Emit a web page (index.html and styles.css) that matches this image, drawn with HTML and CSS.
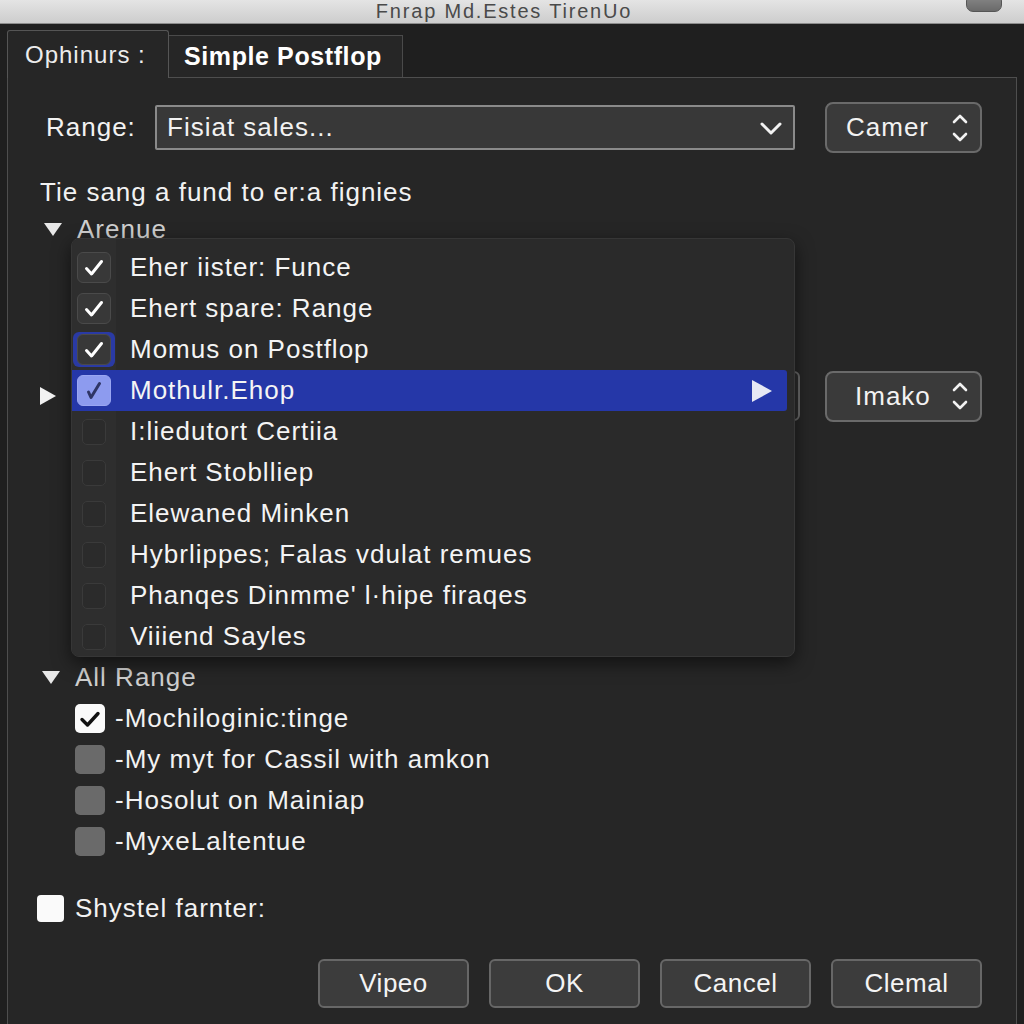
FILE: index.html
```html
<!DOCTYPE html>
<html>
<head>
<meta charset="utf-8">
<link rel="stylesheet" href="styles.css">
</head>
<body>
<div class="window">
  <div class="titlebar">
    <span class="title">Fnrap Md.Estes TirenUo</span>
    <span class="pill"></span>
  </div>
  <div class="tabs">
    <div class="tab tab-active">Ophinurs :</div>
    <div class="tab tab-bold">Simple Postflop</div>
  </div>
  <div class="panel">
    <div class="range-row">
      <span class="range-label">Range:</span>
      <div class="select">
        <span>Fisiat sales...</span>
        <svg class="chev" width="24" height="16" viewBox="0 0 24 16"><path d="M3 3 L12 12 L21 3" fill="none" stroke="#f2f2f2" stroke-width="3" stroke-linecap="round" stroke-linejoin="round"/></svg>
      </div>
      <div class="stepper">
        <span>Camer</span>
        <svg width="16" height="32" viewBox="0 0 16 32"><path d="M2 10 L8 4 L14 10 M2 22 L8 28 L14 22" fill="none" stroke="#f2f2f2" stroke-width="2.6" stroke-linecap="round" stroke-linejoin="round"/></svg>
      </div>
    </div>
    <div class="desc">Tie sang a fund to er:a fignies</div>
    <div class="section-head head-a"><span class="tri-down"></span><span class="dim">Arenue</span></div>
    <div class="under-row">
      <span class="tri-right"></span>
      <div class="select-under"></div>
      <div class="stepper stepper-under">
        <span>Imako</span>
        <svg width="16" height="32" viewBox="0 0 16 32"><path d="M2 10 L8 4 L14 10 M2 22 L8 28 L14 22" fill="none" stroke="#f2f2f2" stroke-width="2.6" stroke-linecap="round" stroke-linejoin="round"/></svg>
      </div>
    </div>
    <div class="section-head head-b"><span class="tri-down"></span><span class="dim">All Range</span></div>
    <div class="list">
      <div class="item"><span class="cb cb-white"><svg width="24" height="24" viewBox="0 0 24 24"><path d="M4 12.5 L9.5 18 L20 6.5" fill="none" stroke="#111" stroke-width="3.4" stroke-linecap="round" stroke-linejoin="round"/></svg></span><span>-Mochiloginic:tinge</span></div>
      <div class="item"><span class="cb cb-gray"></span><span>-My myt for Cassil with amkon</span></div>
      <div class="item"><span class="cb cb-gray"></span><span>-Hosolut on Mainiap</span></div>
      <div class="item"><span class="cb cb-gray"></span><span>-MyxeLaltentue</span></div>
    </div>
    <div class="solo"><span class="cb-solo"></span><span>Shystel farnter:</span></div>
    <div class="buttons">
      <button class="btn">Vipeo</button>
      <button class="btn">OK</button>
      <button class="btn">Cancel</button>
      <button class="btn">Clemal</button>
    </div>

    <div class="menu">
      <div class="gutter"></div>
      <div class="mi"><span class="cell"><span class="mcb mcb-on"><svg width="22" height="22" viewBox="0 0 22 22"><path d="M3.5 11.5 L8.5 17 L18.5 4.5" fill="none" stroke="#fff" stroke-width="3" stroke-linecap="round" stroke-linejoin="round"/></svg></span></span><span class="mt">Eher iister: Funce</span></div>
      <div class="mi"><span class="cell"><span class="mcb mcb-on"><svg width="22" height="22" viewBox="0 0 22 22"><path d="M3.5 11.5 L8.5 17 L18.5 4.5" fill="none" stroke="#fff" stroke-width="3" stroke-linecap="round" stroke-linejoin="round"/></svg></span></span><span class="mt">Ehert spare: Range</span></div>
      <div class="mi"><span class="cell"><span class="focus"><span class="mcb mcb-on"><svg width="22" height="22" viewBox="0 0 22 22"><path d="M3.5 11.5 L8.5 17 L18.5 4.5" fill="none" stroke="#fff" stroke-width="3" stroke-linecap="round" stroke-linejoin="round"/></svg></span></span></span><span class="mt">Momus on Postflop</span></div>
      <div class="mi mi-hl"><span class="cell"><span class="mcb mcb-hl"><svg width="22" height="22" viewBox="0 0 22 22"><path d="M5.5 12 L8 17.5 L16.5 3.5" fill="none" stroke="#2f3566" stroke-width="3" stroke-linecap="round" stroke-linejoin="round"/></svg></span></span><span class="mt">Mothulr.Ehop</span><span class="arrow"></span></div>
      <div class="mi"><span class="cell"><span class="mcb mcb-off"></span></span><span class="mt">I:liedutort Certiia</span></div>
      <div class="mi"><span class="cell"><span class="mcb mcb-off"></span></span><span class="mt">Ehert Stoblliep</span></div>
      <div class="mi"><span class="cell"><span class="mcb mcb-off"></span></span><span class="mt">Elewaned Minken</span></div>
      <div class="mi"><span class="cell"><span class="mcb mcb-off"></span></span><span class="mt">Hybrlippes; Falas vdulat remues</span></div>
      <div class="mi"><span class="cell"><span class="mcb mcb-off"></span></span><span class="mt">Phanqes Dinmme' l·hipe firaqes</span></div>
      <div class="mi"><span class="cell"><span class="mcb mcb-off"></span></span><span class="mt">Viiiend Sayles</span></div>
    </div>
  </div>
</div>
</body>
</html>
```
FILE: styles.css
```css
* { box-sizing: border-box; }
html, body { margin: 0; padding: 0; }
body {
  width: 1024px;
  height: 1024px;
  overflow: hidden;
  background: #1f1f1f;
  font-family: "Liberation Sans", Arial, sans-serif;
  letter-spacing: 1px;
  color: #f2f2f2;
}
.window {
  width: 1024px;
  height: 1024px;
  display: flex;
  flex-direction: column;
}
.titlebar {
  height: 24px;
  flex: none;
  background: linear-gradient(#e4e4e4, #cdcdcd);
  border-bottom: 1px solid #8c8c8c;
  position: relative;
  display: flex;
  justify-content: center;
  overflow: hidden;
}
.title {
  font-size: 20px;
  line-height: 22px;
  height: 22px;
  color: #4a4a4a;
  margin-right: 16px;
  margin-top: 0;
  letter-spacing: 1.8px;
}
.pill {
  position: absolute;
  right: 22px;
  top: -6px;
  width: 36px;
  height: 18px;
  border-radius: 7px;
  background: linear-gradient(#8a8a8a, #6a6a6a);
  border: 1px solid #555;
}
.tabs {
  flex: none;
  display: flex;
  align-items: flex-end;
  margin-top: 6px;
  padding-left: 7px;
  height: 47px;
}
.tab {
  display: flex;
  align-items: center;
  border: 1px solid #4a4a4a;
  border-bottom: none;
}
.tab-active {
  width: 162px;
  height: 48px;
  margin-bottom: -1px;
  background: #262626;
  border-color: #555;
  border-radius: 3px 3px 0 0;
  position: relative;
  z-index: 2;
  color: #ececec;
  padding-left: 17px;
  font-size: 24px;
}
.tab-bold {
  width: 234px;
  height: 42px;
  background: #262626;
  font-weight: bold;
  color: #ffffff;
  padding-left: 15px;
  border-left: none;
  font-size: 25px;
  letter-spacing: 0.6px;
}
.panel {
  flex: 1;
  margin-left: 7px;
  width: 1010px;
  background: #262626;
  border: 1px solid #4e4e4e;
  border-bottom: none;
  position: relative;
  display: flex;
  flex-direction: column;
}
.range-row {
  margin-top: 24px;
  height: 51px;
  display: flex;
  align-items: center;
  margin-left: 38px;
}
.range-label {
  width: 109px;
  font-size: 26px;
}
.select {
  width: 640px;
  height: 45px;
  background: #383838;
  border: 2px solid #8a8a8a;
  border-radius: 2px;
  display: flex;
  align-items: center;
  justify-content: space-between;
  padding: 0 10px 0 10px;
  font-size: 26px;
}
.chev { margin-top: 2px; }
.stepper {
  margin-left: 30px;
  width: 157px;
  height: 51px;
  border-radius: 8px;
  background: #3a3a3a;
  border: 2px solid #6a6a6a;
  display: flex;
  align-items: center;
  justify-content: space-between;
  padding: 0 12px 0 19px;
  font-size: 26px;
}
.desc {
  margin-top: 23px;
  height: 32px;
  line-height: 32px;
  margin-left: 32px;
  font-size: 26px;
}
.section-head {
  height: 30px;
  display: flex;
  align-items: center;
  font-size: 26px;
}
.head-a { margin-top: 6px; margin-left: 36px; }
.head-b { margin-top: 241px; margin-left: 34px; }
.dim { color: #cfcfcf; margin-left: 15px; }
.tri-down {
  width: 0; height: 0;
  border-left: 9px solid transparent;
  border-right: 9px solid transparent;
  border-top: 13px solid #e8e8e8;
}
.under-row {
  margin-top: 127px;
  height: 50px;
  display: flex;
  align-items: center;
  margin-left: 32px;
}
.tri-right {
  width: 0; height: 0;
  border-top: 9px solid transparent;
  border-bottom: 9px solid transparent;
  border-left: 16px solid #f2f2f2;
  margin-right: 99px;
}
.select-under {
  width: 645px;
  height: 50px;
  border: 2px solid #6a6a6a;
  border-radius: 6px;
  background: #2c2c2c;
}
.stepper-under {
  margin-left: 25px;
  padding-left: 28px;
}
.list {
  margin-top: 6px;
  margin-left: 67px;
  display: flex;
  flex-direction: column;
}
.item {
  height: 41px;
  display: flex;
  align-items: center;
  font-size: 26px;
}
.cb {
  width: 30px;
  height: 29px;
  border-radius: 5px;
  margin-right: 10px;
  display: flex;
  align-items: center;
  justify-content: center;
}
.cb-white { background: #fafafa; }
.cb-gray { background: #6a6a6a; }
.solo {
  margin-top: 31px;
  margin-left: 29px;
  height: 30px;
  display: flex;
  align-items: center;
  font-size: 26px;
}
.cb-solo {
  width: 27px;
  height: 27px;
  background: #fafafa;
  border-radius: 4px;
  margin-right: 11px;
}
.buttons {
  margin-top: 36px;
  height: 49px;
  display: flex;
  justify-content: flex-end;
  gap: 20px;
  margin-right: 34px;
}
.btn {
  width: 151px;
  height: 49px;
  background: #3c3c3c;
  border: 2px solid #676767;
  border-radius: 6px;
  color: #f4f4f4;
  font-family: "Liberation Sans", Arial, sans-serif;
  font-size: 26px;
  letter-spacing: 0.5px;
  padding: 0;
}
.menu {
  position: absolute;
  left: 63px;
  top: 160px;
  width: 724px;
  height: 419px;
  background: #2a2a2a;
  border: 1px solid #363636;
  border-radius: 8px;
  box-shadow: 0 6px 18px rgba(0,0,0,0.55);
  padding-top: 8px;
  overflow: hidden;
  display: flex;
  flex-direction: column;
  z-index: 5;
}
.gutter {
  position: absolute;
  left: 0; top: 0; bottom: 0;
  width: 44px;
  background: #2e2e2e;
}
.mi {
  position: relative;
  height: 41px;
  display: flex;
  align-items: center;
  font-size: 26px;
  color: #f4f4f4;
  margin-right: 7px;
}
.mi-hl {
  background: #2537a8;
  border-radius: 0 3px 3px 0;
}
.cell {
  width: 44px;
  height: 41px;
  flex: none;
  display: flex;
  align-items: center;
  justify-content: center;
}
.mt { margin-left: 14px; }
.mcb {
  width: 34px;
  height: 31px;
  border-radius: 6px;
  display: flex;
  align-items: center;
  justify-content: center;
  flex: none;
}
.mcb-on {
  background: #383838;
  border: 1px solid #4a4a4a;
}
.mcb-off {
  width: 24px;
  height: 26px;
  background: #2b2b2b;
  border: 1px solid #3a3a3a;
  border-radius: 5px;
}
.focus {
  display: flex;
  align-items: center;
  justify-content: center;
  width: 42px;
  height: 35px;
  background: #2a3aa4;
  border-radius: 6px;
}
.mcb-hl {
  background: #8d9bef;
  border: 1px solid #9aa6f2;
}
.arrow {
  position: absolute;
  right: 15px;
  width: 0; height: 0;
  border-top: 11px solid transparent;
  border-bottom: 11px solid transparent;
  border-left: 20px solid #e6e8f4;
}
```
